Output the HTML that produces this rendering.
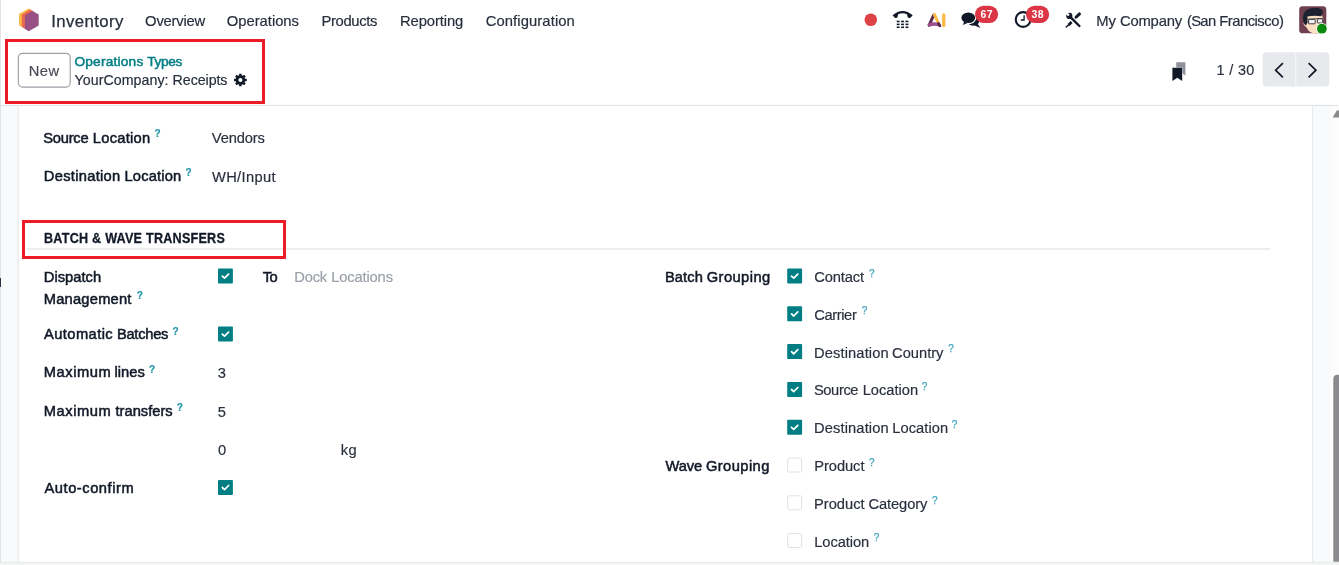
<!DOCTYPE html>
<html lang="en">
<head>
<meta charset="utf-8">
<title>Inventory - Operations Types</title>
<style>
html,body{margin:0;padding:0;}
body{width:1339px;height:565px;overflow:hidden;position:relative;background:#fff;font-family:"Liberation Sans", sans-serif;}
.abs{position:absolute;}
.t{position:absolute;white-space:nowrap;line-height:20px;display:block;}
.grp{font-size:0;line-height:0;}
</style>
</head>
<body>
<!-- page background pieces -->
<svg class="abs" style="left:0;top:0" width="1339" height="565" viewBox="0 0 1339 565">
<rect x="0" y="105" width="1339" height="460" fill="#f9fafb"/>
<rect x="0" y="104.8" width="1339" height="1.3" fill="#e4e5e8"/>
<rect x="0" y="0" width="1" height="565" fill="#e2e3e5"/>
<!-- form sheet -->
<rect x="17.6" y="106" width="1295.4" height="456" fill="#e7e8ea"/>
<rect x="18.8" y="106" width="1293.3" height="456" fill="#fff"/>
<!-- bottom edge -->
<rect x="0" y="561.9" width="1339" height="1.2" fill="#e9eaeb"/>
<rect x="0" y="563.1" width="1339" height="1.9" fill="#f3f4f4"/>
<!-- section separator -->
<rect x="26.5" y="248.2" width="1243.5" height="1.6" fill="#e8e9eb"/>
<!-- scrollbar -->
<rect x="1330.2" y="106" width="8.8" height="456" fill="#fcfcfd"/>
<path d="M1332.6 117.4 L1336.8 110.4 L1339 110.4 L1339 117.4 Z" fill="#8a8a8c"/>
<path d="M1332.3 561.9 V378 Q1332.3 373.7 1336.6 373.7 H1339 V561.9 Z" fill="#fff"/>
<path d="M1333.3 561.7 V379 Q1333.3 374.7 1337.6 374.7 H1339 V561.7 Z" fill="#8b8b8d"/>
<!-- left edge artifact -->
<rect x="0" y="278" width="1" height="9" fill="#2b3445"/>
</svg>

<!-- New button -->
<!-- pager buttons -->
<svg class="abs" style="left:0;top:0" width="1339" height="105" viewBox="0 0 1339 105">
  <!-- New button -->
  <rect x="18.35" y="53.35" width="51.9" height="33.7" rx="4.2" fill="#fff" stroke="#a39ca6" stroke-width="1.15"/>
  <!-- pager buttons -->
  <rect x="1262.6" y="52.3" width="66.7" height="34.3" rx="3.6" fill="#e7e9ed"/>
  <rect x="1295.3" y="52.3" width="1" height="34.3" fill="#f7f8f9"/>
  <!-- app logo -->
  <g>
    <polygon points="28.5,8.4 31.2,10 31.2,26 22,27 19,25.2 19,13.9" fill="#fbb945"/>
    <polygon points="30.3,9.5 33.6,11.4 33.6,28 25.2,29 21.8,27 21.8,14.4" fill="#e8674f"/>
    <polygon points="32.5,11 38.7,14.6 38.7,25.4 28.7,31.2 24.9,29 24.9,15.4" fill="#985184"/>
  </g>
  <!-- gear -->
  <g transform="translate(240.4 80)">
    <circle r="3.4" fill="none" stroke="#111827" stroke-width="2.8"/>
    <g stroke="#111827" stroke-width="2.5" stroke-linecap="butt">
      <path d="M0 -6.35 V-4 M0 6.35 V4 M-6.35 0 H-4 M6.35 0 H4"/>
      <path d="M0 -6.35 V-4 M0 6.35 V4 M-6.35 0 H-4 M6.35 0 H4" transform="rotate(45)"/>
    </g>
  </g>
  <!-- bookmark -->
  <path d="M1176.3 62.2 H1185.4 V75.4 L1182.6 73.6 V67.4 H1176.3 Z" fill="#8e9199"/>
  <path d="M1172.4 67.7 H1182.2 V81 L1177.3 77.7 L1172.4 81 Z" fill="#111827"/>
  <!-- pager chevrons -->
  <path d="M1282.9 63.1 L1275.6 70.2 L1282.9 77.3" fill="none" stroke="#111827" stroke-width="1.7"/>
  <path d="M1308.6 63.1 L1315.9 70.2 L1308.6 77.3" fill="none" stroke="#111827" stroke-width="1.7"/>
  <!-- record dot -->
  <circle cx="870.8" cy="19.8" r="6.3" fill="#db4347"/>
  <!-- phone -->
  <g fill="#111827">
    <path d="M892.6 15.3 Q902.6 6.6 912.7 15.3 L910.4 17.8 Q909.2 18.3 907.8 17.6 L907 14.3 Q902.6 12.3 898.2 14.3 L897.4 17.6 Q896 18.3 894.8 17.8 Z"/>
    <rect x="896.7" y="20.7" width="2.9" height="1.55"/><rect x="901.1" y="20.7" width="2.9" height="1.55"/><rect x="905.5" y="20.7" width="2.9" height="1.55"/>
    <rect x="896.7" y="23.6" width="2.9" height="1.55"/><rect x="901.1" y="23.6" width="2.9" height="1.55"/><rect x="905.5" y="23.6" width="2.9" height="1.55"/>
    <rect x="896.7" y="26.5" width="2.9" height="1.55"/><rect x="901.1" y="26.5" width="2.9" height="1.55"/><rect x="905.5" y="26.5" width="2.9" height="1.55"/>
  </g>
  <!-- AI logo -->
  <g fill="none" stroke-linecap="round">
    <path d="M933.7 15 L929.2 25.2" stroke="#5b2a4a" stroke-width="3"/>
    <path d="M929.3 24.9 Q934 23.1 938.6 24.6" stroke="#9a4f8c" stroke-width="3.5"/>
    <path d="M934.3 14.5 L938.3 22.6" stroke="#fbb945" stroke-width="2.9"/>
    <path d="M938.4 23.4 L939.9 25.8" stroke="#5b2a4a" stroke-width="2.8"/>
    <path d="M943.75 14.8 V25.6" stroke="#fbb945" stroke-width="3.3"/>
  </g>
  <!-- chat -->
  <g>
    <ellipse cx="973.2" cy="20.9" rx="6.2" ry="4.8" fill="#111827"/>
    <path d="M977.4 23.6 L980.5 27.9 L974.6 25.6 Z" fill="#111827"/>
    <ellipse cx="968.3" cy="17.7" rx="8.1" ry="6.5" fill="#fff"/>
    <ellipse cx="968.3" cy="17.7" rx="6.9" ry="5.3" fill="#111827"/>
    <path d="M964.2 21.4 L962.8 24.9 L967.6 22.9 Z" fill="#111827"/>
  </g>
  <rect x="975" y="5.7" width="23.1" height="17.3" rx="8.65" fill="#dc3545"/>
  <!-- clock -->
  <circle cx="1023.1" cy="19.5" r="7.35" fill="none" stroke="#111827" stroke-width="2.1"/>
  <path d="M1024.1 15.3 V20 H1020.8" fill="none" stroke="#111827" stroke-width="1.3"/>
  <rect x="1026" y="5.8" width="23.1" height="17.3" rx="8.65" fill="#dc3545"/>
  <!-- tools -->
  <g fill="none" stroke="#111827">
    <path d="M1070 16.6 L1079.4 26" stroke-width="2.4" stroke-linecap="round"/>
    <circle cx="1069.3" cy="15.9" r="3.1" fill="#111827" stroke="none"/>
    <path d="M1068.9 15.5 L1065.3 11.9" stroke="#fff" stroke-width="2.3"/>
    <path d="M1079.5 13.9 L1076 17.3" stroke-width="2.9" stroke-linecap="round"/>
    <path d="M1071.6 22 L1068.6 25" stroke-width="2.7" stroke-linecap="butt"/>
    <path d="M1069 24.6 L1066.2 27" stroke-width="1.4" stroke-linecap="round"/>
  </g>
  <!-- avatar -->
  <g>
    <rect x="1299.2" y="6.2" width="27.1" height="27.1" rx="3.4" fill="#6f404e"/>
    <path d="M1304.2 21.4 Q1302.8 23.6 1304.6 25.8 L1306.6 27.6 Q1308.6 32 1312.6 33.3 L1318 33.3 Q1321.6 29 1322.8 24.6 L1323.2 18 L1320 12.6 L1306 14.6 Z" fill="#fbdfc2"/>
    <path d="M1303.4 21.6 Q1301.6 12.6 1307.4 9.4 Q1314.6 6.4 1321.4 9.2 Q1324.4 11.4 1321 16.2 Q1313.4 15.2 1307.4 16.6 L1307.6 22.8 L1305.8 25.6 Q1304 24.4 1303.4 21.6 Z" fill="#1d2130"/>
    <rect x="1308.6" y="19.4" width="6.6" height="4.4" rx="0.6" fill="#f4f1ee" stroke="#3a3d4a" stroke-width="1"/>
    <rect x="1317.4" y="18.8" width="5.2" height="4.2" rx="0.6" fill="#f4f1ee" stroke="#3a3d4a" stroke-width="1"/>
    <path d="M1307 19.2 L1323.2 18.4" stroke="#3a3d4a" stroke-width="0.9" fill="none"/>
    <circle cx="1321.9" cy="28.7" r="5.7" fill="#fff"/>
    <circle cx="1321.9" cy="28.7" r="4.9" fill="#0a8a0c"/>
  </g>
</svg>


<div id="txt" style="position:absolute;left:0;top:0;width:1339px;height:565px;will-change:transform">
<div class="t" id="t0" style="left:51.19px;top:12px;font-size:16.8px;font-weight:400;color:#272e3c;letter-spacing:0.403px;-webkit-text-stroke:0.25px #272e3c;">Inventory</div>
<div class="t" id="t1" style="left:145.12px;top:11px;font-size:14.8px;font-weight:400;color:#272e3c;letter-spacing:-0.233px;-webkit-text-stroke:0.18px #272e3c;">Overview</div>
<div class="t" id="t2" style="left:226.85px;top:11px;font-size:14.8px;font-weight:400;color:#272e3c;letter-spacing:-0.032px;-webkit-text-stroke:0.18px #272e3c;">Operations</div>
<div class="t" id="t3" style="left:321.41px;top:11px;font-size:14.8px;font-weight:400;color:#272e3c;letter-spacing:-0.329px;-webkit-text-stroke:0.18px #272e3c;">Products</div>
<div class="t" id="t4" style="left:399.96px;top:11px;font-size:14.8px;font-weight:400;color:#272e3c;letter-spacing:-0.095px;-webkit-text-stroke:0.18px #272e3c;">Reporting</div>
<div class="t" id="t5" style="left:485.70px;top:11px;font-size:14.8px;font-weight:400;color:#272e3c;letter-spacing:0.094px;-webkit-text-stroke:0.18px #272e3c;">Configuration</div>
<div class="grp">
<span class="t" id="t6" style="left:1096.21px;top:11px;font-size:14.8px;font-weight:400;color:#272e3c;letter-spacing:0.033px;-webkit-text-stroke:0.18px #272e3c;">My</span>
<span class="t" id="t7" style="left:1119.94px;top:11px;font-size:14.8px;font-weight:400;color:#272e3c;letter-spacing:-0.192px;-webkit-text-stroke:0.18px #272e3c;">Company</span>
<span class="t" id="t8" style="left:1186.91px;top:11px;font-size:14.8px;font-weight:400;color:#272e3c;letter-spacing:-0.673px;-webkit-text-stroke:0.18px #272e3c;">(San</span>
<span class="t" id="t9" style="left:1219.21px;top:11px;font-size:14.8px;font-weight:400;color:#272e3c;letter-spacing:-0.492px;-webkit-text-stroke:0.18px #272e3c;">Francisco)</span>
</div>
<div class="t" id="t10" style="left:980.53px;top:4px;font-size:10.5px;font-weight:700;color:#ffffff;letter-spacing:0.414px;">67</div>
<div class="t" id="t11" style="left:1031.40px;top:4px;font-size:10.5px;font-weight:700;color:#ffffff;letter-spacing:0.550px;">38</div>
<div class="t" id="t12" style="left:28.78px;top:61px;font-size:14.7px;font-weight:400;color:#4f4857;letter-spacing:0.437px;-webkit-text-stroke:0.18px #4f4857;">New</div>
<div class="grp">
<span class="t" id="t13" style="left:74.42px;top:52px;font-size:13.7px;font-weight:400;color:#017e84;letter-spacing:0.208px;-webkit-text-stroke:0.5px #017e84;">Operations</span>
<span class="t" id="t14" style="left:147.23px;top:52px;font-size:13.7px;font-weight:400;color:#017e84;letter-spacing:-0.355px;-webkit-text-stroke:0.5px #017e84;">Types</span>
</div>
<div class="grp">
<span class="t" id="t15" style="left:74.53px;top:70px;font-size:14.2px;font-weight:400;color:#272e3c;letter-spacing:0.060px;-webkit-text-stroke:0.18px #272e3c;">YourCompany:</span>
<span class="t" id="t16" style="left:172.58px;top:70px;font-size:14.2px;font-weight:400;color:#272e3c;letter-spacing:-0.044px;-webkit-text-stroke:0.18px #272e3c;">Receipts</span>
</div>
<div class="t" id="t17" style="left:1216.61px;top:60px;font-size:14.4px;font-weight:400;color:#2a303e;letter-spacing:0.328px;-webkit-text-stroke:0.18px #2a303e;">1 / 30</div>
<div class="grp">
<span class="t" id="t18" style="left:43.33px;top:128px;font-size:14.7px;font-weight:400;color:#111827;letter-spacing:-0.263px;-webkit-text-stroke:0.5px #111827;">Source</span>
<span class="t" id="t19" style="left:92.77px;top:128px;font-size:14.7px;font-weight:400;color:#111827;letter-spacing:0.267px;-webkit-text-stroke:0.5px #111827;">Location</span>
</div>
<div class="t" id="t20" style="left:211.87px;top:128px;font-size:14.7px;font-weight:400;color:#2a303e;letter-spacing:-0.157px;-webkit-text-stroke:0.18px #2a303e;">Vendors</div>
<div class="grp">
<span class="t" id="t21" style="left:43.77px;top:166px;font-size:14.7px;font-weight:400;color:#111827;letter-spacing:0.298px;-webkit-text-stroke:0.5px #111827;">Destination</span>
<span class="t" id="t22" style="left:124.50px;top:166px;font-size:14.7px;font-weight:400;color:#111827;letter-spacing:0.174px;-webkit-text-stroke:0.5px #111827;">Location</span>
</div>
<div class="t" id="t23" style="left:211.99px;top:167px;font-size:14.7px;font-weight:400;color:#2a303e;letter-spacing:0.328px;-webkit-text-stroke:0.18px #2a303e;">WH/Input</div>
<div class="t" id="t24" style="left:44.03px;top:229px;font-size:12.6px;font-weight:700;color:#111827;letter-spacing:0.237px;-webkit-text-stroke:0.25px #111827;transform:scaleY(1.12);transform-origin:0 14.37px;">BATCH &amp; WAVE TRANSFERS</div>
<div class="t" id="t25" style="left:43.77px;top:267px;font-size:14.7px;font-weight:400;color:#111827;letter-spacing:0.027px;-webkit-text-stroke:0.5px #111827;">Dispatch</div>
<div class="t" id="t26" style="left:43.77px;top:289px;font-size:14.7px;font-weight:400;color:#111827;letter-spacing:0.214px;-webkit-text-stroke:0.5px #111827;">Management</div>
<div class="t" id="t27" style="left:262.65px;top:267px;font-size:14.7px;font-weight:400;color:#111827;letter-spacing:-0.580px;-webkit-text-stroke:0.5px #111827;">To</div>
<div class="grp">
<span class="t" id="t28" style="left:294.27px;top:267px;font-size:14.7px;font-weight:400;color:#9aa0a9;letter-spacing:-0.170px;-webkit-text-stroke:0.18px #9aa0a9;">Dock</span>
<span class="t" id="t29" style="left:331.19px;top:267px;font-size:14.7px;font-weight:400;color:#9aa0a9;letter-spacing:-0.135px;-webkit-text-stroke:0.18px #9aa0a9;">Locations</span>
</div>
<div class="grp">
<span class="t" id="t30" style="left:44.06px;top:324px;font-size:14.7px;font-weight:400;color:#111827;letter-spacing:0.417px;-webkit-text-stroke:0.5px #111827;">Automatic</span>
<span class="t" id="t31" style="left:116.90px;top:324px;font-size:14.7px;font-weight:400;color:#111827;letter-spacing:-0.257px;-webkit-text-stroke:0.5px #111827;">Batches</span>
</div>
<div class="grp">
<span class="t" id="t32" style="left:43.77px;top:362px;font-size:14.7px;font-weight:400;color:#111827;letter-spacing:0.542px;-webkit-text-stroke:0.5px #111827;">Maximum</span>
<span class="t" id="t33" style="left:114.45px;top:362px;font-size:14.7px;font-weight:400;color:#111827;letter-spacing:0.023px;-webkit-text-stroke:0.5px #111827;">lines</span>
</div>
<div class="t" id="t34" style="left:217.72px;top:363px;font-size:14.7px;font-weight:400;color:#2a303e;letter-spacing:0.000px;-webkit-text-stroke:0.18px #2a303e;">3</div>
<div class="grp">
<span class="t" id="t35" style="left:43.77px;top:401px;font-size:14.7px;font-weight:400;color:#111827;letter-spacing:0.542px;-webkit-text-stroke:0.5px #111827;">Maximum</span>
<span class="t" id="t36" style="left:115.54px;top:401px;font-size:14.7px;font-weight:400;color:#111827;letter-spacing:0.003px;-webkit-text-stroke:0.5px #111827;">transfers</span>
</div>
<div class="t" id="t37" style="left:217.78px;top:402px;font-size:14.7px;font-weight:400;color:#2a303e;letter-spacing:0.000px;-webkit-text-stroke:0.18px #2a303e;">5</div>
<div class="t" id="t38" style="left:217.88px;top:440px;font-size:14.7px;font-weight:400;color:#2a303e;letter-spacing:0.000px;-webkit-text-stroke:0.18px #2a303e;">0</div>
<div class="t" id="t39" style="left:340.84px;top:440px;font-size:14.7px;font-weight:400;color:#2a303e;letter-spacing:0.418px;-webkit-text-stroke:0.18px #2a303e;">kg</div>
<div class="t" id="t40" style="left:44.47px;top:478px;font-size:14.7px;font-weight:400;color:#111827;letter-spacing:0.540px;-webkit-text-stroke:0.5px #111827;">Auto-confirm</div>
<div class="grp">
<span class="t" id="t41" style="left:664.90px;top:267px;font-size:14.7px;font-weight:400;color:#111827;letter-spacing:0.114px;-webkit-text-stroke:0.5px #111827;">Batch</span>
<span class="t" id="t42" style="left:706.78px;top:267px;font-size:14.7px;font-weight:400;color:#111827;letter-spacing:0.423px;-webkit-text-stroke:0.5px #111827;">Grouping</span>
</div>
<div class="grp">
<span class="t" id="t43" style="left:665.57px;top:456px;font-size:14.7px;font-weight:400;color:#111827;letter-spacing:-0.164px;-webkit-text-stroke:0.5px #111827;">Wave</span>
<span class="t" id="t44" style="left:705.96px;top:456px;font-size:14.7px;font-weight:400;color:#111827;letter-spacing:0.423px;-webkit-text-stroke:0.5px #111827;">Grouping</span>
</div>
<div class="t" id="t45" style="left:814.24px;top:267px;font-size:14.7px;font-weight:400;color:#2a303e;letter-spacing:-0.123px;-webkit-text-stroke:0.18px #2a303e;">Contact</div>
<div class="t" id="t46" style="left:814.24px;top:305px;font-size:14.7px;font-weight:400;color:#2a303e;letter-spacing:-0.389px;-webkit-text-stroke:0.18px #2a303e;">Carrier</div>
<div class="grp">
<span class="t" id="t47" style="left:813.99px;top:343px;font-size:14.7px;font-weight:400;color:#2a303e;letter-spacing:0.122px;-webkit-text-stroke:0.18px #2a303e;">Destination</span>
<span class="t" id="t48" style="left:892.11px;top:343px;font-size:14.7px;font-weight:400;color:#2a303e;letter-spacing:-0.016px;-webkit-text-stroke:0.18px #2a303e;">Country</span>
</div>
<div class="grp">
<span class="t" id="t49" style="left:813.90px;top:380px;font-size:14.7px;font-weight:400;color:#2a303e;letter-spacing:-0.377px;-webkit-text-stroke:0.18px #2a303e;">Source</span>
<span class="t" id="t50" style="left:862.68px;top:380px;font-size:14.7px;font-weight:400;color:#2a303e;letter-spacing:-0.016px;-webkit-text-stroke:0.18px #2a303e;">Location</span>
</div>
<div class="grp">
<span class="t" id="t51" style="left:813.99px;top:418px;font-size:14.7px;font-weight:400;color:#2a303e;letter-spacing:0.122px;-webkit-text-stroke:0.18px #2a303e;">Destination</span>
<span class="t" id="t52" style="left:892.27px;top:418px;font-size:14.7px;font-weight:400;color:#2a303e;letter-spacing:0.037px;-webkit-text-stroke:0.18px #2a303e;">Location</span>
</div>
<div class="t" id="t53" style="left:814.27px;top:456px;font-size:14.7px;font-weight:400;color:#2a303e;letter-spacing:-0.068px;-webkit-text-stroke:0.18px #2a303e;">Product</div>
<div class="grp">
<span class="t" id="t54" style="left:813.99px;top:494px;font-size:14.7px;font-weight:400;color:#2a303e;letter-spacing:-0.008px;-webkit-text-stroke:0.18px #2a303e;">Product</span>
<span class="t" id="t55" style="left:868.55px;top:494px;font-size:14.7px;font-weight:400;color:#2a303e;letter-spacing:-0.114px;-webkit-text-stroke:0.18px #2a303e;">Category</span>
</div>
<div class="t" id="t56" style="left:814.27px;top:532px;font-size:14.7px;font-weight:400;color:#2a303e;letter-spacing:-0.079px;-webkit-text-stroke:0.18px #2a303e;">Location</div>
<div class="t" id="t57" style="left:154.62px;top:124px;font-size:10.0px;font-weight:700;color:#2494a9;-webkit-text-stroke:0.2px #2494a9;">?</div>
<div class="t" id="t58" style="left:185.38px;top:163px;font-size:10.0px;font-weight:700;color:#2494a9;-webkit-text-stroke:0.2px #2494a9;">?</div>
<div class="t" id="t59" style="left:136.77px;top:286px;font-size:10.0px;font-weight:700;color:#2494a9;-webkit-text-stroke:0.2px #2494a9;">?</div>
<div class="t" id="t60" style="left:172.62px;top:322px;font-size:10.0px;font-weight:700;color:#2494a9;-webkit-text-stroke:0.2px #2494a9;">?</div>
<div class="t" id="t61" style="left:149.03px;top:360px;font-size:10.0px;font-weight:700;color:#2494a9;-webkit-text-stroke:0.2px #2494a9;">?</div>
<div class="t" id="t62" style="left:176.68px;top:398px;font-size:10.0px;font-weight:700;color:#2494a9;-webkit-text-stroke:0.2px #2494a9;">?</div>
<div class="t" id="t63" style="left:869.01px;top:264px;font-size:10.0px;font-weight:400;color:#3fa4bd;-webkit-text-stroke:0.25px #3fa4bd;">?</div>
<div class="t" id="t64" style="left:861.81px;top:301px;font-size:10.0px;font-weight:400;color:#3fa4bd;-webkit-text-stroke:0.25px #3fa4bd;">?</div>
<div class="t" id="t65" style="left:948.19px;top:339px;font-size:10.0px;font-weight:400;color:#3fa4bd;-webkit-text-stroke:0.25px #3fa4bd;">?</div>
<div class="t" id="t66" style="left:921.81px;top:377px;font-size:10.0px;font-weight:400;color:#3fa4bd;-webkit-text-stroke:0.25px #3fa4bd;">?</div>
<div class="t" id="t67" style="left:951.74px;top:415px;font-size:10.0px;font-weight:400;color:#3fa4bd;-webkit-text-stroke:0.25px #3fa4bd;">?</div>
<div class="t" id="t68" style="left:869.01px;top:453px;font-size:10.0px;font-weight:400;color:#3fa4bd;-webkit-text-stroke:0.25px #3fa4bd;">?</div>
<div class="t" id="t69" style="left:932.01px;top:491px;font-size:10.0px;font-weight:400;color:#3fa4bd;-webkit-text-stroke:0.25px #3fa4bd;">?</div>
<div class="t" id="t70" style="left:873.79px;top:528px;font-size:10.0px;font-weight:400;color:#3fa4bd;-webkit-text-stroke:0.25px #3fa4bd;">?</div>
</div>


<!-- annotations -->
<svg class="abs" style="left:0;top:0;pointer-events:none" width="1339" height="565" viewBox="0 0 1339 565">
<g transform="translate(218 268.5)"><rect width="14.9" height="15" rx="0.9" fill="#017e84"/><path d="M4.3 7.6 L6.5 9.7 L10.6 5.6" fill="none" stroke="#fff" stroke-width="1.75" stroke-linecap="round" stroke-linejoin="round"/></g><g transform="translate(218 326.5)"><rect width="14.9" height="15" rx="0.9" fill="#017e84"/><path d="M4.3 7.6 L6.5 9.7 L10.6 5.6" fill="none" stroke="#fff" stroke-width="1.75" stroke-linecap="round" stroke-linejoin="round"/></g><g transform="translate(218 479.9)"><rect width="14.9" height="15" rx="0.9" fill="#017e84"/><path d="M4.3 7.6 L6.5 9.7 L10.6 5.6" fill="none" stroke="#fff" stroke-width="1.75" stroke-linecap="round" stroke-linejoin="round"/></g><g transform="translate(787.2 268.5)"><rect width="14.9" height="15" rx="0.9" fill="#017e84"/><path d="M4.3 7.6 L6.5 9.7 L10.6 5.6" fill="none" stroke="#fff" stroke-width="1.75" stroke-linecap="round" stroke-linejoin="round"/></g><g transform="translate(787.2 306.3)"><rect width="14.9" height="15" rx="0.9" fill="#017e84"/><path d="M4.3 7.6 L6.5 9.7 L10.6 5.6" fill="none" stroke="#fff" stroke-width="1.75" stroke-linecap="round" stroke-linejoin="round"/></g><g transform="translate(787.2 344.1)"><rect width="14.9" height="15" rx="0.9" fill="#017e84"/><path d="M4.3 7.6 L6.5 9.7 L10.6 5.6" fill="none" stroke="#fff" stroke-width="1.75" stroke-linecap="round" stroke-linejoin="round"/></g><g transform="translate(787.2 381.9)"><rect width="14.9" height="15" rx="0.9" fill="#017e84"/><path d="M4.3 7.6 L6.5 9.7 L10.6 5.6" fill="none" stroke="#fff" stroke-width="1.75" stroke-linecap="round" stroke-linejoin="round"/></g><g transform="translate(787.2 419.7)"><rect width="14.9" height="15" rx="0.9" fill="#017e84"/><path d="M4.3 7.6 L6.5 9.7 L10.6 5.6" fill="none" stroke="#fff" stroke-width="1.75" stroke-linecap="round" stroke-linejoin="round"/></g><g transform="translate(787.2 457.5)"><rect x="0.5" y="0.5" width="13.9" height="14" rx="1.2" fill="#fff" stroke="#dfe1e4" stroke-width="1"/></g><g transform="translate(787.2 495.29999999999995)"><rect x="0.5" y="0.5" width="13.9" height="14" rx="1.2" fill="#fff" stroke="#dfe1e4" stroke-width="1"/></g><g transform="translate(787.2 533.0999999999999)"><rect x="0.5" y="0.5" width="13.9" height="14" rx="1.2" fill="#fff" stroke="#dfe1e4" stroke-width="1"/></g>
<rect x="6.5" y="40.5" width="257" height="62" fill="none" stroke="#ed1c24" stroke-width="3"/>
<rect x="23.5" y="221.5" width="261" height="36" fill="none" stroke="#ed1c24" stroke-width="3"/>
</svg>
</body>
</html>
